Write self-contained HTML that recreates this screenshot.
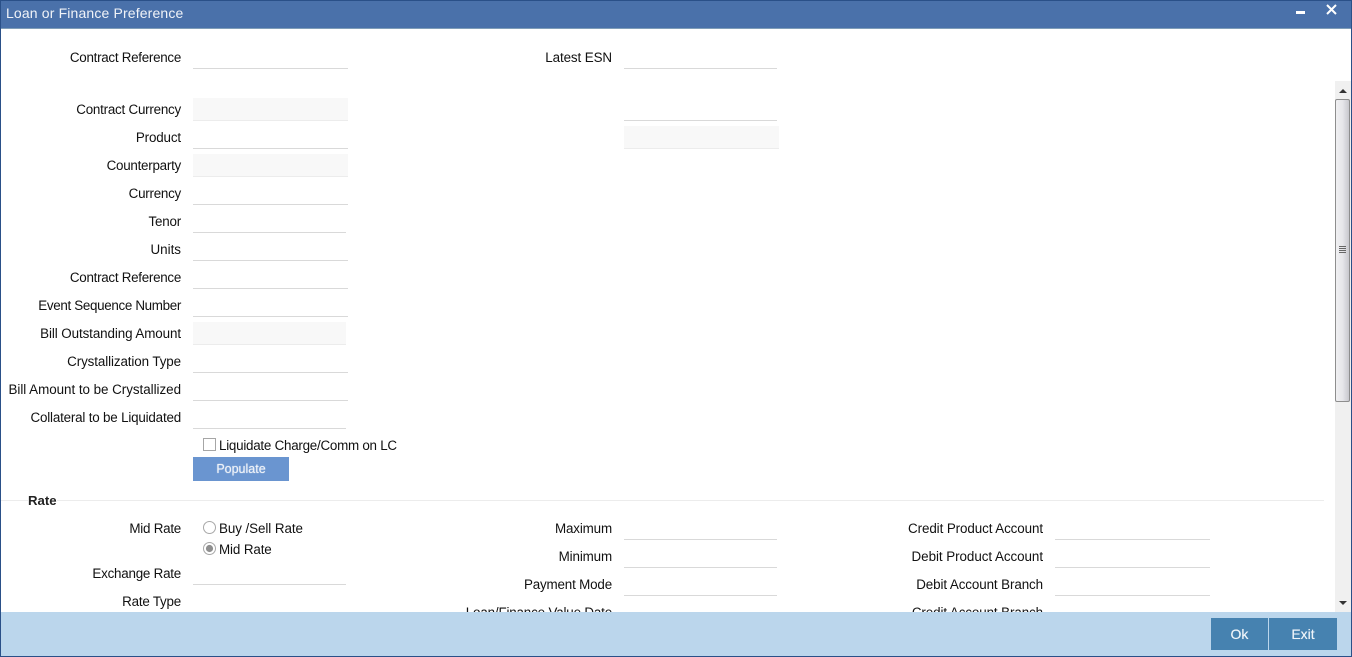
<!DOCTYPE html>
<html><head><meta charset="utf-8"><style>
html,body{margin:0;padding:0;width:1352px;height:657px;overflow:hidden;background:#fff}
body{position:relative;font-family:"Liberation Sans",Arial,sans-serif;font-size:13.4px;color:#111}
.l{position:absolute;white-space:nowrap;height:16px;line-height:16px;text-align:right}
.t{position:absolute;white-space:nowrap;height:16px;line-height:16px}
.f{position:absolute;box-sizing:border-box;border-bottom:1px solid #d9d9d9;height:24px}
.g{background:#f8f8f8;border-bottom:1px solid #ececec;border-top:1px solid #fff}
.a{position:absolute}
</style></head><body>
<div id="content" style="position:absolute;left:0;top:0;width:1352px;height:612px;overflow:hidden">
<div class="l" style="right:1171px;top:50px;letter-spacing:-.28px">Contract Reference</div><div class="f" style="left:193px;top:45px;width:155px"></div>
<div class="l" style="right:740px;top:50px;letter-spacing:-.1px">Latest ESN</div><div class="f" style="left:624px;top:45px;width:153px"></div>
<div class="l" style="right:1171px;top:102px;letter-spacing:-.23px">Contract Currency</div><div class="f g" style="left:193px;top:97px;width:155px"></div>
<div class="f" style="left:624px;top:97px;width:153px"></div>
<div class="f g" style="left:624px;top:125px;width:155px"></div>
<div class="l" style="right:1171px;top:130px;letter-spacing:-.14px">Product</div><div class="f" style="left:193px;top:125px;width:155px"></div>
<div class="l" style="right:1171px;top:158px;letter-spacing:-.25px">Counterparty</div><div class="f g" style="left:193px;top:153px;width:155px"></div>
<div class="l" style="right:1171px;top:186px;letter-spacing:-.25px">Currency</div><div class="f" style="left:193px;top:181px;width:155px"></div>
<div class="l" style="right:1171px;top:214px;letter-spacing:-.2px">Tenor</div><div class="f" style="left:193px;top:209px;width:153px"></div>
<div class="l" style="right:1171px;top:242px">Units</div><div class="f" style="left:193px;top:237px;width:155px"></div>
<div class="l" style="right:1171px;top:270px;letter-spacing:-.28px">Contract Reference</div><div class="f" style="left:193px;top:265px;width:155px"></div>
<div class="l" style="right:1171px;top:298px;letter-spacing:-.33px">Event Sequence Number</div><div class="f" style="left:193px;top:293px;width:155px"></div>
<div class="l" style="right:1171px;top:326px;letter-spacing:-.09px">Bill Outstanding Amount</div><div class="f g" style="left:193px;top:321px;width:153px"></div>
<div class="l" style="right:1171px;top:354px;letter-spacing:-.1px">Crystallization Type</div><div class="f" style="left:193px;top:349px;width:155px"></div>
<div class="l" style="right:1171px;top:382px;letter-spacing:-.03px">Bill Amount to be Crystallized</div><div class="f" style="left:193px;top:377px;width:155px"></div>
<div class="l" style="right:1171px;top:410px;letter-spacing:-.19px">Collateral to be Liquidated</div><div class="f" style="left:193px;top:405px;width:153px"></div>
<div class="a" style="left:203px;top:438px;width:13px;height:13px;box-sizing:border-box;border:1px solid #a6a6a6;background:#fff"></div>
<div class="t" style="left:219px;top:438px;letter-spacing:-.25px">Liquidate Charge/Comm on LC</div>
<div class="a" style="left:193px;top:457px;width:96px;height:24px;background:#6a95d0;color:#eef2f8;text-align:center;line-height:25px;font-size:12.5px;text-shadow:0 0 1px #dfe8f5">Populate</div>
<div class="a" style="left:0;top:500px;width:1324px;height:1px;background:#ececec"></div>
<div class="a" style="left:28px;top:493px;width:29px;height:16px;line-height:16px;background:#fff;font-weight:bold;color:#222;font-size:13.2px">Rate</div>
<div class="l" style="right:1171px;top:521px;letter-spacing:-.25px">Mid Rate</div>
<svg class="a" style="left:202px;top:520px" width="15" height="15"><circle cx="7.5" cy="7.5" r="6" fill="#fff" stroke="#a8a8a8"/></svg>
<div class="t" style="left:219px;top:521px;letter-spacing:-.07px">Buy /Sell Rate</div>
<svg class="a" style="left:202px;top:541px" width="15" height="15"><circle cx="7.5" cy="7.5" r="6" fill="#fff" stroke="#a8a8a8"/><circle cx="7.5" cy="7.5" r="3.6" fill="#8f8f8f"/></svg>
<div class="t" style="left:219px;top:542px;letter-spacing:-.12px">Mid Rate</div>
<div class="l" style="right:1171px;top:566px;letter-spacing:-.23px">Exchange Rate</div><div class="f" style="left:193px;top:561px;width:153px"></div>
<div class="l" style="right:1171px;top:594px;letter-spacing:-.22px">Rate Type</div>
<div class="l" style="right:740px;top:521px;letter-spacing:-.14px">Maximum</div><div class="f" style="left:624px;top:516px;width:153px"></div>
<div class="l" style="right:740px;top:549px;letter-spacing:-.14px">Minimum</div><div class="f" style="left:624px;top:544px;width:153px"></div>
<div class="l" style="right:740px;top:577px;letter-spacing:-.17px">Payment Mode</div><div class="f" style="left:624px;top:572px;width:153px"></div>
<div class="l" style="right:740px;top:605px;letter-spacing:-.17px">Loan/Finance Value Date</div>
<div class="l" style="right:309px;top:521px;letter-spacing:-.09px">Credit Product Account</div><div class="f" style="left:1055px;top:516px;width:155px"></div>
<div class="l" style="right:309px;top:549px;letter-spacing:-.05px">Debit Product Account</div><div class="f" style="left:1055px;top:544px;width:155px"></div>
<div class="l" style="right:309px;top:577px;letter-spacing:-.1px">Debit Account Branch</div><div class="f" style="left:1055px;top:572px;width:155px"></div>
<div class="l" style="right:309px;top:605px;letter-spacing:-.1px">Credit Account Branch</div>
</div>
<!-- scrollbar -->
<div class="a" style="left:1335px;top:81px;width:16px;height:531px;background:#f0f0f0"></div>
<svg class="a" style="left:1335px;top:81px" width="16" height="18"><path d="M4 12 L8 8 L12 12Z" fill="#333"/></svg>
<svg class="a" style="left:1335px;top:594px" width="16" height="18"><path d="M4 7 L12 7 L8 11Z" fill="#333"/></svg>
<div class="a" style="left:1335px;top:99px;width:15px;height:303px;box-sizing:border-box;border:1px solid #8e8e8e;border-radius:2px;background:linear-gradient(90deg,#f0f0f2,#e6e6ea 50%,#c8c8ce)"></div>
<div class="a" style="left:1339px;top:246px;width:7px;height:1px;background:#666;box-shadow:0 2px #666,0 4px #666,0 6px #666"></div>
<!-- title -->
<div class="a" style="left:0;top:0;width:1352px;height:29px;box-sizing:border-box;background:#4a71aa;border-top:1px solid #2a5088;border-bottom:1px solid #7f9db8"></div>
<div class="a" style="left:6px;top:5px;height:16px;line-height:16px;color:#f0f3f8;font-size:14px;letter-spacing:.15px;white-space:nowrap">Loan or Finance Preference</div>
<div class="a" style="left:1296px;top:11px;width:9px;height:3px;background:#fff"></div>
<svg class="a" style="left:1325px;top:3px" width="13" height="13"><path d="M2 2 L11 11 M11 2 L2 11" stroke="#fff" stroke-width="2"/></svg>
<!-- footer -->
<div class="a" style="left:0;top:612px;width:1352px;height:45px;background:#bbd6ec"></div>
<div class="a" style="left:1211px;top:618px;width:57px;height:32px;background:#4682b0;color:#eef4f9;font-size:14px;line-height:32px;text-align:center;text-shadow:0 0 .5px #eef4f9">Ok</div>
<div class="a" style="left:1269px;top:618px;width:68px;height:32px;background:#4682b0;color:#eef4f9;font-size:14px;line-height:32px;text-align:center;text-shadow:0 0 .5px #eef4f9">Exit</div>
<!-- window border -->
<div class="a" style="left:0;top:0;width:1px;height:657px;background:#2a5088"></div>
<div class="a" style="left:1351px;top:0;width:1px;height:657px;background:#2a5088"></div>
<div class="a" style="left:0;top:656px;width:1352px;height:1px;background:#2a5088"></div>
</body></html>
